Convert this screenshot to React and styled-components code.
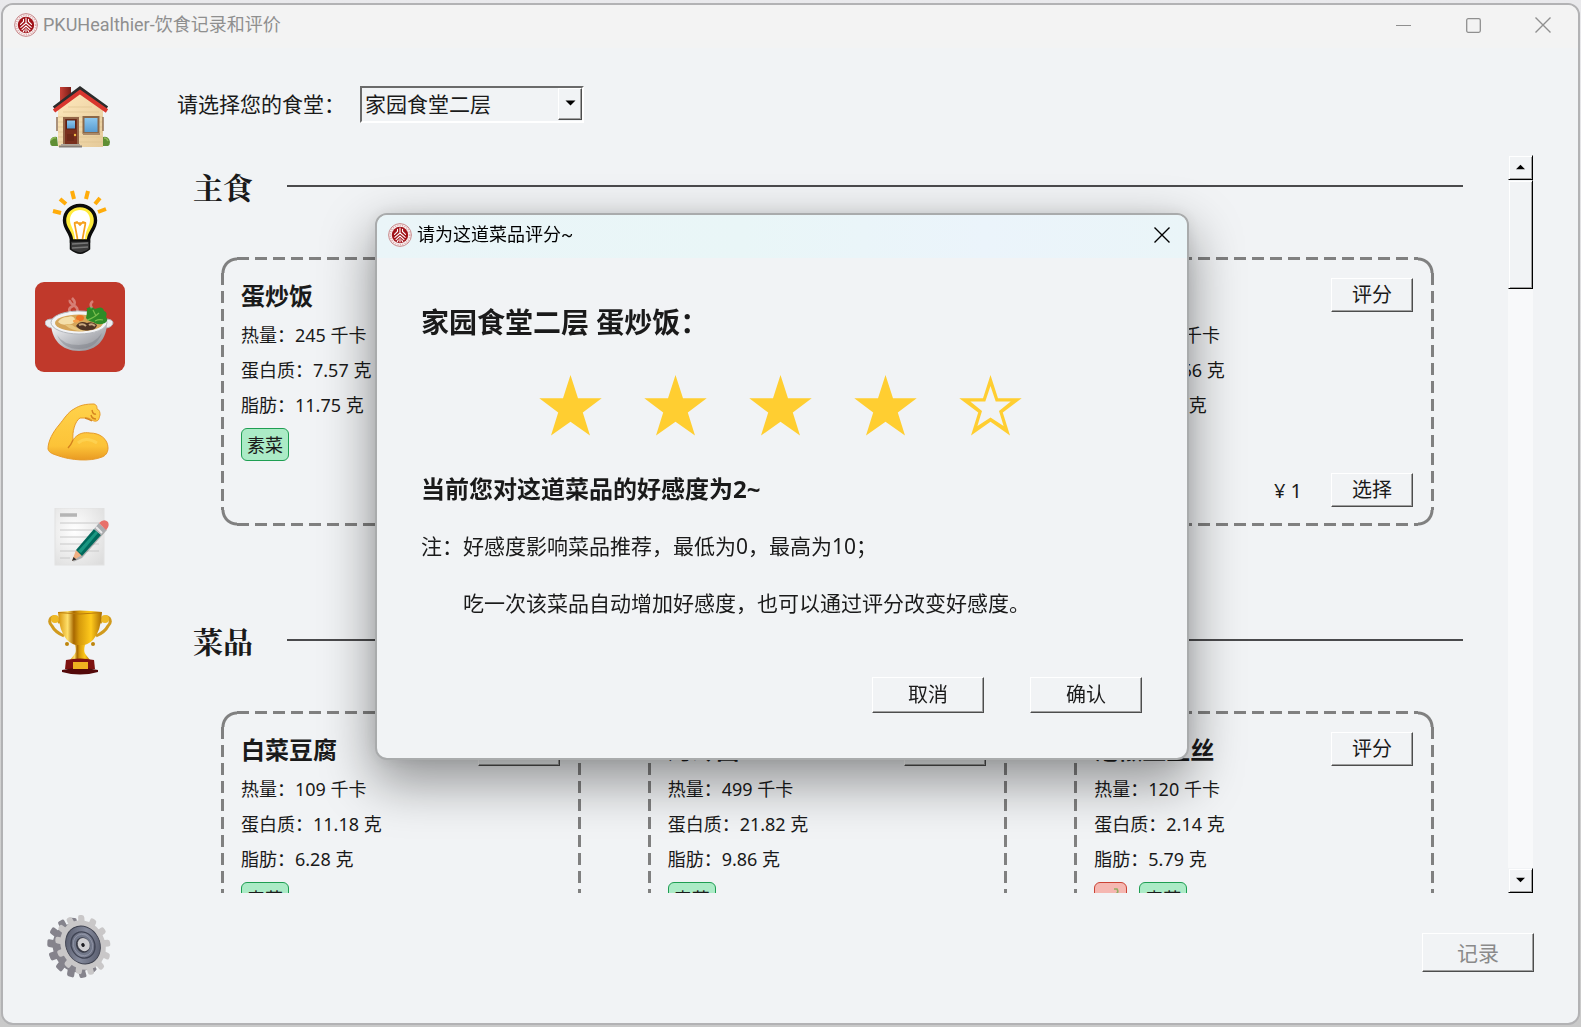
import React, { useState } from 'react';
import styled, { createGlobalStyle, css } from 'styled-components';

const GlobalStyle = createGlobalStyle`
  *, *::before, *::after { box-sizing: border-box; }
  body {
    margin: 0;
    background: linear-gradient(#e9e9ec, #c9c9c9);
    color: #1a1a1a;
    font-family: "Noto Sans", "Noto Sans CJK SC", sans-serif;
    font-size: 18px;
  }
  button, select { font-family: inherit; color: inherit; margin: 0; }
  h1, h2, h3, p { margin: 0; }
`;

const raised = css`
  border-style: solid;
  border-width: 1px;
  border-color: #ffffff #4d4d4d #4d4d4d #ffffff;
  box-shadow: inset -1px -1px 0 #a0a0a0;
`;

const AppWindow = styled.div`
  height: calc(100vh - 5px);
  margin: 3px 1px 2px;
  display: flex;
  flex-direction: column;
  border: 2px solid #b2b2b4;
  border-radius: 12px;
  background: #f1f3f5;
  overflow: hidden;
`;

const TitleBar = styled.header`
  display: flex;
  align-items: center;
  height: 43px;
  flex: none;
  padding: 0 0 3px 11px;
  background: ${(p) => (p.$active ? 'linear-gradient(90deg, #eaf5f8, #e9f6f7 45%, #ebf4fb 75%, #eaf5f8)' : '#f3f3f3')};
  color: ${(p) => (p.$active ? '#000000' : '#8f8f8f')};
`;

const WindowTitle = styled.h1`
  flex: 1;
  margin-left: 5px;
  font-family: Roboto, "Noto Sans CJK SC", sans-serif;
  font-size: 18px;
  line-height: 24px;
  font-weight: 400;
`;

const CaptionButton = styled.button`
  width: ${(p) => p.$width || 70}px;
  height: 40px;
  padding: 0;
  border: 0;
  background: transparent;
  display: grid;
  place-items: center;
  color: inherit;
`;

const Body = styled.div`
  flex: 1;
  min-height: 0;
  display: flex;
  gap: 52px;
  padding: 0 44px 0 32px;
`;

const Sidebar = styled.nav`
  flex: none;
  display: flex;
  flex-direction: column;
  gap: 15px;
  padding: 24px 0 32px;
`;

const NavButton = styled.button`
  width: 90px;
  height: 90px;
  padding: 0;
  border: 0;
  border-radius: 9px;
  background: ${(p) => (p.$current ? '#c0392b' : 'transparent')};
  display: grid;
  place-items: center;
  &:last-child { margin-top: auto; }
`;

const Main = styled.main`
  flex: 1;
  min-width: 0;
  display: flex;
  flex-direction: column;
  padding: 38px 0 51px;
`;

const CanteenRow = styled.div`
  display: flex;
  align-items: center;
  gap: 15px;
  font-size: 21px;
  line-height: 28px;
`;

const CanteenLabel = styled.label`
  padding-bottom: 2px;
`;

const ComboBox = styled.div`
  display: flex;
  width: 224px;
  height: 37px;
  border: 2px solid;
  border-color: #6a6a6a #ffffff #ffffff #6a6a6a;
`;

const Select = styled.select`
  flex: 1;
  min-width: 0;
  appearance: none;
  border: 0;
  outline: 0;
  padding: 0 4px 2px 3px;
  background: transparent;
  font-size: 21px;
  line-height: 28px;
`;

const ComboArrow = styled.span`
  ${raised}
  width: 24px;
  margin-bottom: 1px;
  padding-bottom: 2px;
  display: grid;
  place-items: center;
  pointer-events: none;
`;

const ScrollPane = styled.div`
  flex: 1;
  min-height: 0;
  display: flex;
  margin: 32px 1px 40px 0;
`;

const Viewport = styled.div`
  flex: 1;
  min-width: 0;
  overflow: hidden;
  padding: 0 45px 0 16px;
`;

const ScrollBar = styled.div`
  flex: none;
  width: 25px;
  display: flex;
  flex-direction: column;
  background: #f8f9fa;
`;

const scrollPart = css`
  border: 1px solid;
  border-color: #f1f3f5 #000000 #000000 #f1f3f5;
  box-shadow: inset 1px 1px 0 #ffffff, inset -1px -1px 0 #a0a0a0;
  background: #f1f3f5;
`;

const ScrollStep = styled.button`
  ${scrollPart}
  height: 25px;
  padding: 0 1px 2px 0;
  display: grid;
  place-items: center;
  &:last-child { margin-top: auto; }
`;

const ScrollThumb = styled.div`
  ${scrollPart}
  height: 109px;
`;

const Section = styled.section`
  padding-bottom: 83px;
`;

const SectionHeader = styled.div`
  display: flex;
  align-items: center;
  gap: 34px;
  height: 62px;
  margin-bottom: 40px;
  &::after {
    content: "";
    flex: 1;
    height: 2px;
    background: #4a4a4c;
  }
`;

const SectionTitle = styled.h2`
  font-family: "Noto Serif CJK SC", "Source Han Serif SC", "Liberation Serif", "Noto Sans CJK SC", serif;
  font-size: 30px;
  line-height: 40px;
  font-weight: 700;
`;

const CardGrid = styled.div`
  display: grid;
  grid-template-columns: repeat(3, 1fr);
  gap: 67px;
  margin: 0 29px 0 28px;
`;

const corner = (at, where) =>
  `radial-gradient(circle at ${at}, transparent 12px, #808080 13px, #808080 15px, transparent 16px) ${where} / 16px 16px no-repeat`;
const dashes = (angle, where, size) =>
  `repeating-linear-gradient(${angle}, #808080 0 12px, transparent 12px 18px) ${where} / ${size} no-repeat`;

const Card = styled.article`
  display: flex;
  justify-content: space-between;
  height: 269px;
  padding: 21px 21px 19px 20px;
  background:
    ${corner('100% 100%', 'left top')},
    ${corner('0% 100%', 'right top')},
    ${corner('100% 0%', 'left bottom')},
    ${corner('0% 0%', 'right bottom')},
    ${dashes('90deg', 'center top', 'calc(100% - 32px) 3px')},
    ${dashes('90deg', 'center bottom', 'calc(100% - 32px) 3px')},
    ${dashes('180deg', 'left center', '3px calc(100% - 32px)')},
    ${dashes('180deg', 'right center', '3px calc(100% - 32px)')};
`;

const DishInfo = styled.div`
  white-space: nowrap;
`;

const DishName = styled.h3`
  font-size: 24px;
  line-height: 36px;
  font-weight: 700;
  margin-bottom: 4px;
`;

const Nutrient = styled.p`
  font-size: 18px;
  line-height: 35px;
`;

const Tags = styled.div`
  display: flex;
  gap: 12px;
  margin-top: 5px;
`;

const Tag = styled.span`
  display: grid;
  place-items: center;
  height: 33px;
  padding: 0 5px;
  border: 1px solid ${(p) => (p.$spicy ? '#cb4335' : '#1e9e52')};
  border-radius: 6px;
  background: ${(p) => (p.$spicy ? '#f5b7b1' : '#abebc6')};
  font-size: 18px;
  line-height: 24px;
`;

const DishActions = styled.div`
  display: flex;
  flex-direction: column;
  justify-content: space-between;
  align-items: flex-end;
`;

const Purchase = styled.div`
  display: flex;
  align-items: center;
  gap: 29px;
  font-size: 20px;
`;

const Button = styled.button`
  ${raised}
  width: ${(p) => (p.$size === 'small' ? 82 : 112)}px;
  height: ${(p) => ({ small: 34, medium: 36, large: 39 })[p.$size]}px;
  padding: 0;
  background: #f1f3f5;
  font-size: ${(p) => (p.$size === 'large' ? 21 : 20)}px;
  line-height: 28px;
  color: #1a1a1a;
  &:disabled { color: #8a8a8a; }
`;

const Footer = styled.footer`
  display: flex;
  justify-content: flex-end;
`;

const Overlay = styled.div`
  position: fixed;
  inset: 0;
  display: flex;
  justify-content: center;
  align-items: flex-start;
  padding: 213px 17px 0 0;
`;

const Dialog = styled.div`
  width: 814px;
  border: 2px solid #a9abac;
  border-radius: 12px;
  background: #f1f3f5;
  overflow: hidden;
  box-shadow: 0 20px 52px 2px rgba(0, 0, 0, 0.4), 0 0 16px rgba(0, 0, 0, 0.08);
`;

const DialogBody = styled.div`
  padding: 43px 45px 45px 44px;
`;

const DialogHeading = styled.h2`
  font-size: 28px;
  line-height: 42px;
  font-weight: 700;
`;

const Stars = styled.div`
  display: flex;
  justify-content: center;
  gap: 42px;
  padding: 32px 2px 35px 0;
`;

const StarButton = styled.button`
  width: 63px;
  height: 61px;
  padding: 0;
  border: 0;
  background: transparent;
  display: block;
`;

const Favor = styled.p`
  font-size: 24px;
  line-height: 36px;
  font-weight: 700;
  margin-bottom: 11px;
`;

const Note = styled.p`
  font-size: 21px;
  line-height: 57px;
  padding-left: ${(p) => (p.$indent ? 42 : 0)}px;
`;

const DialogActions = styled.div`
  display: flex;
  justify-content: flex-end;
  gap: 46px;
  padding-top: 45px;
`;

function Logo() {
  return (
    <svg width="24" height="24" viewBox="0 0 24 24" fill="none" aria-hidden="true">
      <circle cx="12" cy="12" r="11.4" fill="#f8eeee" stroke="#c98a8c" strokeWidth="1" />
      <circle cx="12" cy="12" r="9.8" stroke="#d9a9ab" strokeWidth="1.6" strokeDasharray="1 1.4" />
      <circle cx="12" cy="12" r="8.2" fill="#a01218" />
      <g stroke="#fff" strokeWidth="1.1" strokeLinecap="round">
        <path d="M12 5v5M9.5 6.2v2.3l-3 2.8M14.500 6.200v2.300l3 2.800M12 10l-5.200 4.400M12 10l5.200 4.400M12 13l-4 3.600M12 13l4 3.600M12 15.500v3.500M10.300 17l-1 1.600M13.700 17l1 1.600" />
      </g>
    </svg>
  );
}

function CloseIcon() {
  return (
    <svg width="16" height="16" viewBox="0 0 16 16" fill="none" stroke="currentColor" strokeWidth="1.4" aria-hidden="true">
      <path d="M.5.5l15 15M15.500.500l-15 15" />
    </svg>
  );
}

function MinimizeIcon() {
  return (
    <svg width="15" height="15" viewBox="0 0 15 15" aria-hidden="true">
      <path d="M0 7.500h15" stroke="currentColor" />
    </svg>
  );
}

function MaximizeIcon() {
  return (
    <svg width="15" height="15" viewBox="0 0 15 15" fill="none" aria-hidden="true">
      <rect x=".7" y=".7" width="13.600" height="13.600" rx="1.500" stroke="currentColor" strokeWidth="1.300" />
    </svg>
  );
}

function Arrow({ up, wide }) {
  return (
    <svg width={wide ? 11 : 9} height="6" viewBox="0 0 10 6" aria-hidden="true">
      <path d={up ? 'M0 5.500h10L5 .5z' : 'M0 .5h10L5 5.500z'} fill="#000" />
    </svg>
  );
}

function HomeIcon() {
  return (
    <svg width="60" height="62" viewBox="0 0 60 62" aria-hidden="true">
      <defs>
        <linearGradient id="wall" x1="0" y1="0" x2="1" y2="1">
          <stop offset="0" stopColor="#ffe9bd" /><stop offset="1" stopColor="#e5ca9a" />
        </linearGradient>
        <linearGradient id="glass" x1="0" y1="0" x2="0" y2="1">
          <stop offset="0" stopColor="#8fcaf0" /><stop offset="1" stopColor="#5599cf" />
        </linearGradient>
        <linearGradient id="chim" x1="0" y1="0" x2="1" y2="0">
          <stop offset="0" stopColor="#c94137" /><stop offset="1" stopColor="#7c1d17" />
        </linearGradient>
      </defs>
      <rect x="10" y="1" width="11" height="18" fill="url(#chim)" />
      <path d="M8 24L30 4l23 20v37H8z" fill="url(#wall)" />
      <path d="M8 31h45M8 36h45M8 41h45M8 46h45M8 51h45M8 56h45M18 21h24M13 26h36" stroke="#dcbf8f" strokeWidth=".6" />
      <path d="M4 22L30 2.500 57 22" fill="none" stroke="#2c2c2c" strokeWidth="4" />
      <path d="M4 25L30 6l27 19" fill="none" stroke="#d8362e" strokeWidth="4" />
      <path d="M7 31v14M53 31v14" stroke="#927052" strokeWidth="1.500" />
      <rect x="13" y="31" width="16" height="28" fill="#946749" />
      <rect x="15" y="33" width="12" height="26" fill="#792f1d" />
      <rect x="16.500" y="34" width="9" height="9" fill="url(#glass)" stroke="#5a2012" />
      <path d="M17 48h7v7h-7z" fill="#6c2918" /><circle cx="25" cy="49" r="1.200" fill="#f2bd45" />
      <rect x="33.500" y="31" width="15" height="16" fill="url(#glass)" stroke="#8c6848" strokeWidth="2" />
      <path d="M33 48h17" stroke="#a98a6a" strokeWidth="2" />
      <path d="M0 56q1-6 7-5l1 9H2q-2-1-2-4zM60 56q-1-6-7-5v9h5q2-1 2-4z" fill="#5f8e34" />
      <path d="M1 54q2-3 5-2M54 52q3 0 4 3" stroke="#8db956" fill="none" strokeWidth="1.500" />
      <path d="M11 58h19v1.500H11z" fill="#ada69f" /><path d="M9 59.500h23v2H9z" fill="#867e78" />
    </svg>
  );
}

function BulbIcon() {
  return (
    <svg width="56" height="65" viewBox="0 0 56 65" aria-hidden="true">
      <path d="M1 21l8 2M8 9l6 5M20 1l2 8M36 1l-2 8M48 8l-5 6M54 19l-8 3" stroke="#ffac0a" strokeWidth="4" />
      <path d="M28 15.500c-9 0-15.500 6.500-15.500 15 0 9 7 11.500 7 20.500h17c0-9 7-11.500 7-20.500 0-8.500-6.500-15-15.500-15z" fill="#ffeb3b" stroke="#0b0b0b" strokeWidth="3.400" />
      <path d="M28 20c-6 0-10 4-10 10 0 6 4 8 5 19h10c1-11 5-13 5-19 0-6-4-10-10-10z" fill="#fff" />
      <path d="M22 33h12M22.500 33l3 16M33.500 33l-3 16M22 33l3-1 3 3 3-3 3 1" fill="none" stroke="#f5a01c" strokeWidth="1.700" />
      <path d="M18.500 51h19v8q-2 2-5 3-4 2.500-9 0-3-1-5-3z" fill="#3c3c3c" stroke="#111" strokeWidth="1.500" />
      <path d="M20 54l16-1M20 58l16-1" stroke="#777" strokeWidth="1.500" />
    </svg>
  );
}

function SoupIcon() {
  return (
    <svg width="70" height="60" viewBox="0 0 70 60" aria-hidden="true">
      <defs>
        <linearGradient id="bowl" x1="0" y1="0" x2="1" y2="1">
          <stop offset="0" stopColor="#fff" /><stop offset=".45" stopColor="#c3c5ca" /><stop offset="1" stopColor="#85878e" />
        </linearGradient>
      </defs>
      <path d="M8 22q-8 0-8 4 1 5 9 5zM60 22q8 0 8 4-1 5-9 5z" fill="#eceef1" stroke="#b6b8be" />
      <path d="M6 25c0 17 10 29 28 29s28-12 28-29z" fill="url(#bowl)" />
      <path d="M12 38q6 14 22 14 17 0 23-16-8 12-23 12-16 0-22-10z" fill="#70727a" opacity=".35" />
      <ellipse cx="34" cy="25.500" rx="28" ry="11.500" fill="#f3f4f6" stroke="#b4b7bc" />
      <ellipse cx="34" cy="26" rx="24" ry="8.500" fill="#d5a55a" />
      <path d="M13 25q3-5 10-5 5-2 7 2 0 6-7 5-6 2-10-2z" fill="#f4dfaa" />
      <path d="M20 28q6-2 10 2 5 3 12 1l-2 3q-12 1-20-6z" fill="#e8c67f" />
      <ellipse cx="35" cy="21" rx="4" ry="3" fill="#ed7426" /><ellipse cx="31" cy="24" rx="3" ry="1.500" fill="#f7a04b" />
      <path d="M31 29q4-6 11-3 6-2 10 2-1 5-7 5-9 2-14-4z" fill="#4e3324" />
      <path d="M34 28q4-2 7 1M44 28q3-2 6 1" stroke="#c9a77e" strokeWidth="2" fill="none" />
      <path d="M41 12q5-4 9 0 8-4 9 2 4 1 2 6 3 3-1 6-7 3-12-1-5-1-7-4 1-4 1-9z" fill="#2e8b27" />
      <path d="M42 23q7-2 12-7M50 24q4-2 8-1M48 13l3 6" stroke="#79bd4d" fill="none" strokeWidth="1.200" />
      <path d="M27 17q-6-5 1-8 4-3-1-8M32 15q2-4-4-7-4-3-3-5M47 11q-3-4 1-7" fill="none" stroke="#fff" strokeWidth="2.600" opacity=".35" />
    </svg>
  );
}

function MuscleIcon() {
  return (
    <svg width="66" height="58" viewBox="0 0 66 58" aria-hidden="true">
      <defs>
        <linearGradient id="arm" x1="0" y1="0" x2="0" y2="1">
          <stop offset="0" stopColor="#ffd24a" /><stop offset=".75" stopColor="#fcc338" /><stop offset="1" stopColor="#e99a22" />
        </linearGradient>
      </defs>
      <path d="M1 46C1 38 6 29 12 22 17 16 21 9 27 6c6-4 12-5 20-5 3 1 3 3 3 5 3 1 3 4 3 6-1 3-1 6-4 6-2 1-5-2-8-3l-8 0c-5 3-8 14-7 22 5-7 11-8 17-7 10 0 18 6 18 15 0 5-3 8-6 9-12 5-32 3-43-1-6-2-10-3-11-7z" fill="url(#arm)" stroke="#e79b29" strokeWidth="1" />
      <path d="M26 37q-2 5-5 8M45 7q1 5 4 4M44 12q1 4 5 4M38 15q4 1 7 3" fill="none" stroke="#d4831f" strokeWidth="1.400" />
      <path d="M31 40q8-7 19 0" stroke="#ffdf6b" strokeWidth="3" fill="none" opacity=".45" />
    </svg>
  );
}

function NoteIcon() {
  return (
    <svg width="59" height="58" viewBox="-4 0 59 58" aria-hidden="true">
      <defs>
        <radialGradient id="paper" cx=".4" cy=".4" r=".8">
          <stop offset="0" stopColor="#fff" /><stop offset="1" stopColor="#dcdcdc" />
        </radialGradient>
      </defs>
      <rect width="49" height="57" fill="url(#paper)" stroke="#e2e2e2" />
      <path d="M5 7h17" stroke="#b5b5b5" strokeWidth="3.500" />
      <path d="M5 15h39M5 22h39M5 29h39M5 36h39M5 43h39M5 50h10" stroke="#c8c8c8" />
      <path d="M18 54l9-4 25-28-3-3z" fill="#555" opacity=".4" />
      <path d="M17 53l4-11 6 5z" fill="#f0b184" /><path d="M17 53l1.500-4 3 2.500z" fill="#303030" />
      <path d="M21 42l18-21 7 6-19 21z" fill="#00695c" /><path d="M23 43l18-20 2 2-17 20z" fill="#199681" />
      <path d="M39 21l5-6 7 7-5 5z" fill="#a9abae" /><path d="M41 19l6 6" stroke="#e9e9ea" strokeWidth="2" />
      <path d="M44 15q5-5 9-1 2 4-2 8z" fill="#e8706a" />
    </svg>
  );
}

function TrophyIcon() {
  return (
    <svg width="64" height="65" viewBox="0 0 64 65" aria-hidden="true">
      <defs>
        <linearGradient id="gold" x1="0" y1="0" x2="1" y2="0">
          <stop offset="0" stopColor="#d69208" /><stop offset=".22" stopColor="#ffe06b" /><stop offset=".36" stopColor="#a86800" />
          <stop offset=".48" stopColor="#d69a0c" /><stop offset=".75" stopColor="#ffca1c" /><stop offset="1" stopColor="#a96c02" />
        </linearGradient>
      </defs>
      <path d="M12 13Q7 4 3 8q-3 4 1 8 3 6 12 10M52 13q5-9 9-5 3 4-1 8-3 6-12 10" fill="none" stroke="#d19a1d" strokeWidth="3" />
      <circle cx="7" cy="9" r="4" fill="#eeb926" /><circle cx="57" cy="9" r="4" fill="#eeb926" />
      <path d="M10 2q22-3 44 0-1 19-9 28-5 5-13 6-8-1-13-6-8-9-9-28z" fill="url(#gold)" />
      <path d="M10 2.500q22 3 44 0" stroke="#bb7d0a" fill="none" />
      <circle cx="19" cy="34" r="2" fill="#bd850d" /><circle cx="45" cy="34" r="2" fill="#bd850d" />
      <path d="M27 35h10q-2 7 1 10l4 5H22l4-5q3-3 1-10z" fill="url(#gold)" />
      <path d="M18 50q14-3 28 0l1 9H17z" fill="#7e1210" />
      <path d="M14 60q18-4 36 0v2q-18 5-36 0z" fill="#54090a" />
      <rect x="25" y="52" width="15" height="7" fill="#efb320" />
    </svg>
  );
}

const TEETH = Array.from({ length: 13 }, (_, i) => (i * 360) / 13);

function GearIcon() {
  return (
    <svg width="66" height="64" viewBox="0 0 66 64" aria-hidden="true">
      <defs>
        <linearGradient id="dial" x1="0" y1="0" x2="1" y2="1">
          <stop offset="0" stopColor="#4b4f60" /><stop offset=".5" stopColor="#858a9c" /><stop offset="1" stopColor="#4b4f60" />
        </linearGradient>
      </defs>
      <g transform="translate(28 34) rotate(-28) scale(.86 1)" fill="#85838c">
        {TEETH.map((a) => <rect key={a} x="-4" y="-31" width="8" height="12" rx="2" transform={`rotate(${a})`} />)}
        <circle r="25" />
      </g>
      <g transform="translate(36 31) rotate(-28) scale(.86 1)">
        <g fill="#c9c7c8">
          {TEETH.map((a) => <rect key={a} x="-3.500" y="-31" width="7" height="12" rx="2.500" transform={`rotate(${a})`} />)}
          <circle r="25.500" />
        </g>
        <circle r="19.500" fill="url(#dial)" stroke="#3e414f" strokeWidth="1" />
        <circle r="13.500" fill="none" stroke="#3f4353" strokeWidth="1.400" />
        <circle r="11" fill="#72788a" stroke="#9a9fb0" strokeWidth=".7" />
        <circle r="8" fill="#3a3c48" />
        <circle cx="1" r="6.800" fill="#d0cfd2" />
        <circle r="2" fill="#1d1d22" />
      </g>
    </svg>
  );
}

function ChiliIcon() {
  return (
    <svg width="21" height="22" viewBox="0 0 21 22" aria-hidden="true">
      <path d="M17 7q-3-2-5 1-3 8-11 9 9 6 15-2 3-4 1-8z" fill="#d93a2b" />
      <path d="M13 7q1-2 4-1 3 1 2 3-3-2-6-2z" fill="#5f9130" />
      <path d="M16 6q3-2 1-5h-3" fill="none" stroke="#93ad62" strokeWidth="1.600" />
    </svg>
  );
}

const STAR = 'M31.500 0L39 23.300h23.700L43.800 37.600 51 60.500 31.500 46.700 12 60.500l7.200-22.900L.3 23.300H24z';

function Star({ filled }) {
  return (
    <svg width="63" height="61" viewBox="0 0 63 61" aria-hidden="true">
      {filled ? (
        <path d={STAR} fill="#ffce31" />
      ) : (
        <path
          fill="#ffce31"
          fillRule="evenodd"
          d={`${STAR}M31.500 11L36.700 26.500h15L40 36l4.600 15L31.500 42.500 18.400 51 23 36 11.300 26.500h15z`}
        />
      )}
    </svg>
  );
}

const NAV = [
  ['主页', HomeIcon],
  ['推荐', BulbIcon],
  ['饮食', SoupIcon],
  ['运动', MuscleIcon],
  ['记录', NoteIcon],
  ['成就', TrophyIcon],
  ['设置', GearIcon],
];

const SECTIONS = [
  {
    title: '主食',
    dishes: [
      { name: '蛋炒饭', heat: 245, protein: '7.57', fat: '11.75', price: 3 },
      { name: '米饭', heat: 116, protein: '2.60', fat: '0.30', price: 1 },
      { name: '馒头', heat: 223, protein: '7.66', fat: '1.10', price: 1, plain: true },
    ],
  },
  {
    title: '菜品',
    dishes: [
      { name: '白菜豆腐', heat: 109, protein: '11.18', fat: '6.28', price: 4 },
      { name: '烤冷面', heat: 499, protein: '21.82', fat: '9.86', price: 8 },
      { name: '泡椒土豆丝', heat: 120, protein: '2.14', fat: '5.79', price: 3, spicy: true },
    ],
  },
];

function DishCard({ dish }) {
  return (
    <Card>
      <DishInfo>
        <DishName>{dish.name}</DishName>
        <Nutrient>热量：{dish.heat} 千卡</Nutrient>
        <Nutrient>蛋白质：{dish.protein} 克</Nutrient>
        <Nutrient>脂肪：{dish.fat} 克</Nutrient>
        {!dish.plain && (
          <Tags>
            {dish.spicy && <Tag $spicy><ChiliIcon /></Tag>}
            <Tag>素菜</Tag>
          </Tags>
        )}
      </DishInfo>
      <DishActions>
        <Button $size="small">评分</Button>
        <Purchase>
          <span>¥ {dish.price}</span>
          <Button $size="small">选择</Button>
        </Purchase>
      </DishActions>
    </Card>
  );
}

function RatingDialog() {
  const [rating, setRating] = useState(4);
  return (
    <Overlay>
      <Dialog role="dialog" aria-labelledby="rating-title">
        <TitleBar $active>
          <Logo />
          <WindowTitle id="rating-title">请为这道菜品评分~</WindowTitle>
          <CaptionButton $width={50} aria-label="关闭"><CloseIcon /></CaptionButton>
        </TitleBar>
        <DialogBody>
          <DialogHeading>家园食堂二层 蛋炒饭：</DialogHeading>
          <Stars>
            {[1, 2, 3, 4, 5].map((n) => (
              <StarButton key={n} aria-label={`${n} 星`} onClick={() => setRating(n)}>
                <Star filled={n <= rating} />
              </StarButton>
            ))}
          </Stars>
          <Favor>当前您对这道菜品的好感度为2~</Favor>
          <Note>注：好感度影响菜品推荐，最低为0，最高为10；</Note>
          <Note $indent>吃一次该菜品自动增加好感度，也可以通过评分改变好感度。</Note>
          <DialogActions>
            <Button $size="medium">取消</Button>
            <Button $size="medium">确认</Button>
          </DialogActions>
        </DialogBody>
      </Dialog>
    </Overlay>
  );
}

export default function App() {
  return (
    <div lang="zh-CN">
      <GlobalStyle />
      <AppWindow>
        <TitleBar>
          <Logo />
          <WindowTitle>PKUHealthier-饮食记录和评价</WindowTitle>
          <CaptionButton aria-label="最小化"><MinimizeIcon /></CaptionButton>
          <CaptionButton aria-label="最大化"><MaximizeIcon /></CaptionButton>
          <CaptionButton aria-label="关闭"><CloseIcon /></CaptionButton>
        </TitleBar>
        <Body>
          <Sidebar>
            {NAV.map(([label, Icon]) => (
              <NavButton key={label} aria-label={label} $current={label === '饮食'}><Icon /></NavButton>
            ))}
          </Sidebar>
          <Main>
            <CanteenRow>
              <CanteenLabel htmlFor="canteen">请选择您的食堂：</CanteenLabel>
              <ComboBox>
                <Select id="canteen" defaultValue="家园食堂二层">
                  <option>家园食堂二层</option>
                </Select>
                <ComboArrow><Arrow wide /></ComboArrow>
              </ComboBox>
            </CanteenRow>
            <ScrollPane>
              <Viewport>
                {SECTIONS.map((section) => (
                  <Section key={section.title}>
                    <SectionHeader><SectionTitle>{section.title}</SectionTitle></SectionHeader>
                    <CardGrid>
                      {section.dishes.map((dish) => <DishCard key={dish.name} dish={dish} />)}
                    </CardGrid>
                  </Section>
                ))}
              </Viewport>
              <ScrollBar>
                <ScrollStep aria-label="向上滚动"><Arrow up /></ScrollStep>
                <ScrollThumb />
                <ScrollStep aria-label="向下滚动"><Arrow /></ScrollStep>
              </ScrollBar>
            </ScrollPane>
            <Footer>
              <Button $size="large" disabled>记录</Button>
            </Footer>
          </Main>
        </Body>
      </AppWindow>
      <RatingDialog />
    </div>
  );
}
